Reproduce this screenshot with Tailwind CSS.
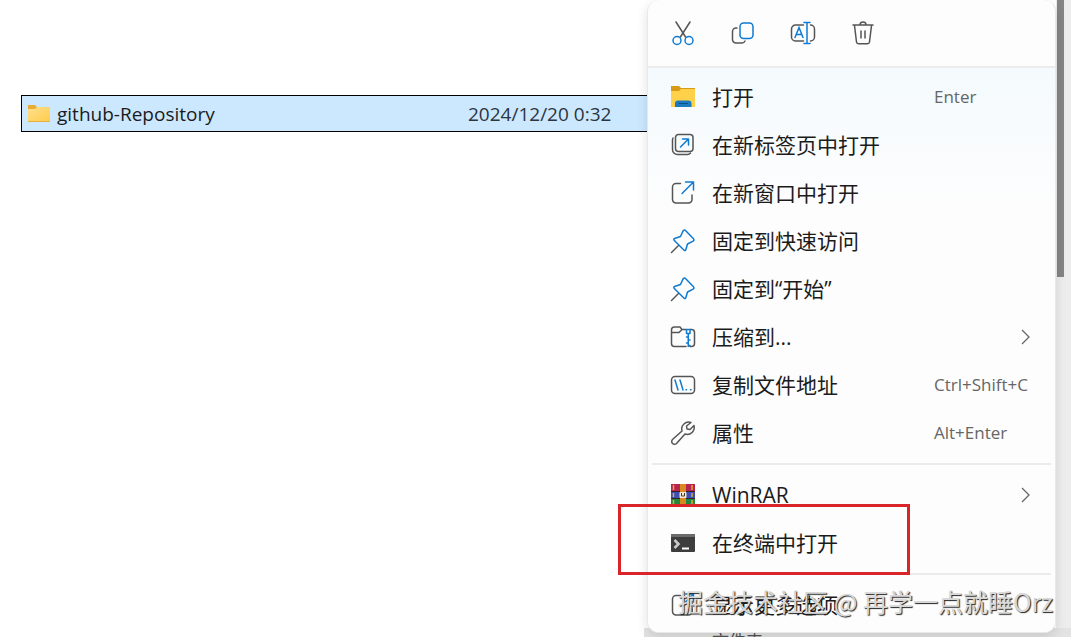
<!DOCTYPE html>
<html lang="zh-CN">
  <head>
    <meta charset="utf-8">
    <meta name="viewport" content="width=device-width, initial-scale=1">
    <title>github-Repository</title>
    <script src="https://cdn.jsdelivr.net/npm/@tailwindcss/browser@4"></script>
  </head>

  <body class="relative flex min-h-screen overflow-hidden bg-white font-['Open_Sans','Noto_Sans_CJK_SC',sans-serif] text-[#1b1b1b]">

    <!-- file list -->
    <main class="min-w-0 flex-1 pt-[95px] pl-[21px]">
      <div class="flex h-[37px] items-center border border-black bg-[#cce8ff] pt-px pl-[5px] text-[19px]">
        <svg class="mr-[6px] h-6 w-6 shrink-0" viewBox="0 0 24 24">
          <defs>
            <linearGradient id="folder" x1="0" y1="0" x2="1" y2="1">
              <stop offset="0" stop-color="#ffe08c" />
              <stop offset="1" stop-color="#ffcb4b" />
            </linearGradient>
          </defs>
          <path d="M1 3h7l2 2h13v3H1z" fill="#e8ab35" />
          <path d="M1 7h7l2-2h13v15H1z" fill="url(#folder)" />
          <path d="M1 19h22v1H1z" fill="#e9b03c" />
        </svg>
        <span class="w-[411px] shrink-0">github-Repository</span>
        <span class="whitespace-nowrap text-[#2b3540]">2024/12/20 0:32</span>
      </div>
    </main>

    <!-- scrollbar -->
    <div class="w-[15px] shrink-0 bg-[#ededed]">
      <div class="ml-px h-[277px] w-[7px] bg-[#858585]"></div>
    </div>

    <!-- strip under the menu -->
    <div class="absolute top-[628px] right-0 left-[644px] h-[9px] overflow-hidden bg-[#e3e3e3] pl-[68px] text-[17px] leading-[26px] text-[#555]">文件夹</div>

    <!-- context menu -->
    <nav class="absolute top-0 right-[15px] w-[409px] overflow-hidden rounded-xl border border-t-0 border-[#e9e9e9] bg-[#fdfdfd] shadow-[0_4px_12px_rgba(0,0,0,0.12)]">
      <div class="flex h-[66px] gap-8 px-[21px] pt-[19px]">
        <button aria-label="剪切" class="h-7 w-7">
          <svg class="h-7 w-7" viewBox="0 0 28 28" fill="none" stroke-width="1.5" stroke-linecap="round">
            <path d="M7 3l9.6 15M21 3l-9.600 15" stroke="#555" />
            <circle cx="8" cy="21.500" r="4" stroke="#0f7ad1" />
            <circle cx="20" cy="21.500" r="4" stroke="#0f7ad1" />
          </svg>
        </button>
        <button aria-label="复制" class="h-7 w-7">
          <svg class="h-7 w-7" viewBox="0 0 28 28" fill="none" stroke-width="1.5" stroke-linecap="round">
            <path d="M8 9H7a3.500 3.500 0 0 0-3.500 3.500v8a3.500 3.500 0 0 0 3.500 3.500h6a3.500 3.500 0 0 0 3-2" stroke="#555" />
            <rect x="11" y="4" width="13" height="15.500" rx="3.500" stroke="#0f7ad1" />
          </svg>
        </button>
        <button aria-label="重命名" class="h-7 w-7">
          <svg class="h-7 w-7" viewBox="0 0 28 28" fill="none" stroke-width="1.500" stroke-linecap="round">
            <path d="M14.500 6H6.500a4 4 0 0 0-4 4v8a4 4 0 0 0 4 4h8M21.500 6a4 4 0 0 1 4 4v8a4 4 0 0 1-4 4" stroke="#555" />
            <path d="M6 18.500L10 8.500l4 10M7.500 15.500h5M18 3.500v21M15 3.500h6M15 24.500h6" stroke="#0f7ad1" />
          </svg>
        </button>
        <button aria-label="删除" class="h-7 w-7">
          <svg class="h-7 w-7" viewBox="0 0 28 28" fill="none" stroke="#555" stroke-width="1.500" stroke-linecap="round" stroke-linejoin="round">
            <path d="M4 6h20M11 6a3 3 0 0 1 6 0M5.500 6.500l2 16.500a2 2 0 0 0 2 1.800h9a2 2 0 0 0 2-1.800L22.500 6.500M12 12v7M16 12v7" />
          </svg>
        </button>
      </div>

      <ul class="border-t-2 border-[#ebecee] bg-linear-to-b from-[#f4fafd] to-[#fdfdfd] to-25% pt-[5px] text-[21px] leading-7">
        <li>
          <button class="flex h-12 w-full items-center pl-[21px] text-left">
            <svg class="mr-[15px] h-7 w-7" viewBox="0 0 28 28">
              <path d="M2 3h8l2 2h14v3H2z" fill="#d79b13" />
              <path d="M2 8h8l2-2h14v18H2z" fill="#ffd04a" />
              <path d="M6 24v-3.500a3 3 0 0 1 3-3h10.500a3 3 0 0 1 3 3V24z" fill="#1b7bbd" />
              <path d="M9.500 20.500h9.500" stroke="#0c4f86" />
            </svg>
            <span class="w-[222px]">打开</span>
            <kbd class="font-['Open_Sans'] text-[17px] text-[#666]">Enter</kbd>
          </button>
        </li>
        <li>
          <button class="flex h-12 w-full items-center pl-[21px] text-left">
            <svg class="mr-[15px] h-7 w-7" viewBox="0 0 28 28" fill="none" stroke-width="1.500" stroke-linecap="round" stroke-linejoin="round">
              <rect x="6.500" y="3.500" width="17.500" height="17" rx="3" stroke="#555" />
              <path d="M4 7a4 4 0 0 0-.5 2v9.500a5 5 0 0 0 5 5h9.500a4 4 0 0 0 3.500-1.500" stroke="#555" />
              <path d="M11.500 16l8-8M13.500 8h6v6" stroke="#0f7ad1" />
            </svg>
            <span>在新标签页中打开</span>
          </button>
        </li>
        <li>
          <button class="flex h-12 w-full items-center pl-[21px] text-left">
            <svg class="mr-[15px] h-7 w-7" viewBox="0 0 28 28" fill="none" stroke-width="1.500" stroke-linecap="round" stroke-linejoin="round">
              <path d="M11.500 4.500H7A3.500 3.500 0 0 0 3.500 8v12.500A3.500 3.500 0 0 0 7 24h12.500a3.500 3.500 0 0 0 3.500-3.500V16" stroke="#555" />
              <path d="M13 14.500L24.500 3M16.500 3h8v8" stroke="#0f7ad1" />
            </svg>
            <span>在新窗口中打开</span>
          </button>
        </li>
        <li>
          <button class="flex h-12 w-full items-center pl-[21px] text-left">
            <svg class="mr-[15px] h-7 w-7" viewBox="0 0 28 28" fill="none" stroke-width="1.500" stroke-linecap="round" stroke-linejoin="round">
              <path d="M9.500 18.500L2.500 25.500" stroke="#555" />
              <path d="M16.500 3.500a1.500 1.500 0 0 0-2.400.4L11.500 9.500 5.500 11.500a1 1 0 0 0-.4 1.700l10 10a1 1 0 0 0 1.700-.4L18.500 17l5.600-2.800a1.500 1.500 0 0 0 .4-2.400z" stroke="#0f7ad1" />
            </svg>
            <span>固定到快速访问</span>
          </button>
        </li>
        <li>
          <button class="flex h-12 w-full items-center pl-[21px] text-left">
            <svg class="mr-[15px] h-7 w-7" viewBox="0 0 28 28" fill="none" stroke-width="1.500" stroke-linecap="round" stroke-linejoin="round">
              <path d="M9.500 18.500L2.500 25.500" stroke="#555" />
              <path d="M16.500 3.500a1.500 1.500 0 0 0-2.400.4L11.500 9.500 5.500 11.500a1 1 0 0 0-.4 1.700l10 10a1 1 0 0 0 1.700-.4L18.500 17l5.600-2.800a1.500 1.500 0 0 0 .4-2.400z" stroke="#0f7ad1" />
            </svg>
            <span>固定到“开始”</span>
          </button>
        </li>
        <li>
          <button class="flex h-12 w-full items-center pr-[22px] pl-[21px] text-left">
            <svg class="mr-[15px] h-7 w-7" viewBox="0 0 28 28" fill="none" stroke-width="1.500" stroke-linecap="round" stroke-linejoin="round">
              <path d="M17 6.500h-4l-2-2.500H5.500A3 3 0 0 0 2.500 7v13.500a3 3 0 0 0 3 3H17M21 6.500h1.500a3 3 0 0 1 3 3v11a3 3 0 0 1-3 3H21M2.500 9.500h7.500l3-3" stroke="#555" />
              <path d="M17.500 6.500h3.500v4h-3.500zM19.250 10.500v13M17.500 14h1.500M19.500 17h1.500M17.500 20h1.500M19.500 22.500h1.500" stroke="#0f7ad1" />
            </svg>
            <span class="flex-1">压缩到...</span>
            <svg class="h-4 w-4" viewBox="0 0 16 16" fill="none" stroke="#666" stroke-width="1.300"><path d="M5 1l7 7-7 7" /></svg>
          </button>
        </li>
        <li>
          <button class="flex h-12 w-full items-center pl-[21px] text-left">
            <svg class="mr-[15px] h-7 w-7" viewBox="0 0 28 28" fill="none" stroke-width="1.500" stroke-linecap="round">
              <rect x="2.500" y="5.500" width="23" height="17" rx="3.500" stroke="#555" />
              <path d="M6 9l3 10M11 9l3 10M17 18.800h.5M21.500 18.800h.5" stroke="#0f7ad1" />
            </svg>
            <span class="w-[222px]">复制文件地址</span>
            <kbd class="font-['Open_Sans'] text-[17px] text-[#666]">Ctrl+Shift+C</kbd>
          </button>
        </li>
        <li>
          <button class="flex h-12 w-full items-center pl-[21px] text-left">
            <svg class="mr-[15px] h-7 w-7" viewBox="0 0 28 28" fill="none" stroke="#555" stroke-width="1.500" stroke-linejoin="round">
              <path d="M22 3.500a7 7 0 0 0-9 8.500L3.500 20.500a2.800 2.800 0 0 0 4 4L16 15a7 7 0 0 0 9-8.500l-4 4-3-.5-.5-3z" />
            </svg>
            <span class="w-[222px]">属性</span>
            <kbd class="font-['Open_Sans'] text-[17px] text-[#666]">Alt+Enter</kbd>
          </button>
        </li>
        <li class="mx-1 my-[6px] h-[2px] bg-[#ebebeb]" role="separator"></li>
        <li>
          <button class="flex h-12 w-full items-center pr-[22px] pl-[21px] text-left">
            <svg class="mr-[15px] h-7 w-7" viewBox="0 0 28 28">
              <rect x="2" y="3" width="24" height="8" fill="#b5254f" />
              <rect x="2" y="11" width="24" height="7" fill="#3b4fb4" />
              <rect x="2" y="18" width="24" height="8" fill="#20883f" />
              <path d="M2 10.500h24M2 17.500h24M2 25.500h24" stroke="#3a2020" />
              <path d="M4.500 4v5M4.500 12v4M4.500 19v5M23 4v5M23 12v4M23 19v5" stroke="#e8a33a" stroke-width="1.500" />
              <rect x="11" y="3" width="6" height="23" fill="#d88a20" />
              <rect x="10.500" y="11" width="7" height="6" rx="1" fill="#f3ead6" />
              <path d="M12.500 12v3h3v-3" fill="none" stroke="#4c3a20" />
            </svg>
            <span class="flex-1">WinRAR</span>
            <svg class="h-4 w-4" viewBox="0 0 16 16" fill="none" stroke="#666" stroke-width="1.300"><path d="M5 1l7 7-7 7" /></svg>
          </button>
        </li>
        <li>
          <button class="flex h-12 w-full items-center pl-[21px] text-left">
            <svg class="mr-[15px] h-7 w-7" viewBox="0 0 28 28">
              <rect x="2" y="5" width="24" height="18" rx="1" fill="#3d3d3d" />
              <path d="M2 6a1 1 0 0 1 1-1h22a1 1 0 0 1 1 1v2H2z" fill="#6b6b6b" />
              <path d="M5.500 11l4 4-4 4" fill="none" stroke="#ccc" stroke-width="2.500" />
              <path d="M13 19.500h7" stroke="#fff" stroke-width="2" />
            </svg>
            <span>在终端中打开</span>
          </button>
        </li>
        <li class="mx-1 my-[6px] h-[2px] bg-[#ebebeb]" role="separator"></li>
        <li class="pb-[3px]">
          <button class="flex h-12 w-full items-center pl-[21px] text-left">
            <svg class="mr-[15px] h-7 w-7" viewBox="0 0 28 28" fill="none" stroke-width="1.500" stroke-linecap="round" stroke-linejoin="round">
              <path d="M11.500 4.500H7A3.500 3.500 0 0 0 3.500 8v12.500A3.500 3.500 0 0 0 7 24h12.500a3.500 3.500 0 0 0 3.500-3.500V16" stroke="#555" />
              <path d="M13 14.500L24.500 3M16.500 3h8v8" stroke="#0f7ad1" />
            </svg>
            <span>显示更多选项</span>
          </button>
        </li>
      </ul>
    </nav>

    <!-- highlight and watermark -->
    <div class="absolute top-[504px] left-[618px] h-[71px] w-[292px] border-3 border-[#d9252a]"></div>
    <p class="absolute right-[18px] bottom-5 whitespace-nowrap font-['Noto_Sans_CJK_SC',sans-serif] text-[25px] leading-8 text-[#d8d8d8] [text-shadow:1px_1px_1px_#222]">掘金技术社区 @ 再学一点就睡Orz</p>
  </body>
</html>
